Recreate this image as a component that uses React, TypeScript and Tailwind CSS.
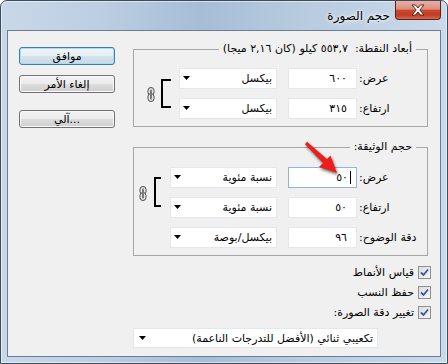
import React from "react";

const FONT = "font-['DejaVu_Sans',Tahoma,sans-serif]";

const DropArrow = () => (
  <svg width="7" height="4" viewBox="0 0 7 4" className="shrink-0">
    <path d="M0 0h7L3.5 4z" fill="#000" />
  </svg>
);

const Select = ({ value, width }: { value: string; width: string }) => (
  <div
    className={`${width} h-[21px] bg-white border border-[#e4e7eb] flex items-center justify-between pr-[4px] pl-[3px] mb-[1px]`}
  >
    <span className="leading-none">{value}</span>
    <DropArrow />
  </div>
);

const Field = ({ value, focused }: { value: string; focused?: boolean }) => (
  <div
    className={`w-[69px] h-[21px] ml-[9px] bg-white border flex items-center ${
      focused ? "border-[#8fb5de] pr-[5px] gap-[2px]" : "border-[#e4e7eb] pr-[9px]"
    }`}
  >
    {focused && <span className="w-px h-[13px] bg-black" />}
    <span className="leading-none">{value}</span>
  </div>
);

type RowProps = {
  label: string;
  value: string;
  unit: string;
  selWidth: string;
  focused?: boolean;
};

const Row = ({ label, value, unit, selWidth, focused }: RowProps) => (
  <div className="flex items-center h-[21px] gap-[2px]">
    <div className="w-[63px] text-left leading-none">{label}</div>
    <Field value={value} focused={focused} />
    <Select value={unit} width={selWidth} />
  </div>
);

const Chain = () => (
  <svg width="8" height="15" viewBox="0 0 8 15">
    <rect x="1" y="0.5" width="6" height="8" rx="3" fill="#e6e6e6" stroke="#4b4b4b" />
    <rect x="1" y="6.5" width="6" height="8" rx="3" fill="#e6e6e6" stroke="#4b4b4b" />
    <rect x="3" y="2.5" width="2" height="10" rx="1" fill="#7a7a7a" />
  </svg>
);

const Check = ({ label }: { label: string }) => (
  <div className="flex items-center h-[20px] gap-[4px]">
    <div className="w-[13px] h-[13px] border border-[#8e8f8f] bg-[linear-gradient(135deg,#d9dce0,#f7f7f7)] flex items-center justify-center">
      <svg width="9" height="9" viewBox="0 0 9 9">
        <path d="M1 4.5L3.5 7L8 1.5" fill="none" stroke="#3b5593" strokeWidth="1.8" />
      </svg>
    </div>
    <span className="leading-none">{label}</span>
  </div>
);

const Btn = ({ children, def }: { children: React.ReactNode; def?: boolean }) => (
  <div
    className={`h-[18px] w-[96px] rounded-[3px] border flex items-center justify-center leading-none ${
      def
        ? "border-[#3c7fb1] shadow-[inset_0_0_0_1px_#a8dcf8] bg-[linear-gradient(#f0f5f8_0%,#e6eef3_50%,#d7e3eb_50%,#c9d8e2_100%)]"
        : "border-[#707070] shadow-[inset_0_0_0_1px_#fbfbfb] bg-[linear-gradient(#f2f2f2_0%,#ebebeb_50%,#dddddd_50%,#cfcfcf_100%)]"
    }`}
  >
    {children}
  </div>
);

const RedArrow = () => (
  <svg
    width="50"
    height="50"
    viewBox="0 0 50 50"
    className="absolute left-[296px] top-[132px] drop-shadow-[1px_2px_1.5px_rgba(0,0,0,0.55)]"
  >
    <path d="M9 12.2L11 9.8L31.5 27.5L27.5 31.5Z" fill="#ee1c1c" />
    <path d="M41 41L23 35L34.5 23.5Z" fill="#ee1c1c" />
  </svg>
);

export default function App() {
  return (
    <div className={`relative w-[448px] h-[364px] ${FONT} text-[11px] text-black`}>
      <div className="w-full h-full flex flex-col rounded-t-[7px] border border-[#3a4c60] shadow-[inset_0_0_0_1px_rgba(255,255,255,0.55)] bg-[linear-gradient(90deg,#c9d8e8_0%,#bccee2_22%,#a6bdd6_45%,#b4c8dd_62%,#cbdaea_100%)] px-[6px] pb-[6px]">
        {/* title bar */}
        <div className="h-[29px] flex justify-end items-start">
          <div className="mt-[8px] mr-[5px] text-[12px] leading-[15px] [text-shadow:0_0_6px_#fff,0_0_3px_#fff]">
            حجم الصورة
          </div>
          <div className="w-[46px] h-[19px] rounded-b-[4px] border border-t-0 border-[#5b2119] bg-[linear-gradient(#eab0a4_0%,#dc8e7d_45%,#c9492f_52%,#c23d24_78%,#d7694f_100%)] flex items-center justify-center">
            <svg width="16" height="12" viewBox="0 0 16 12">
              <path
                d="M2 1h3.5L8 4l2.5-3H14l-4.2 5L14 11h-3.5L8 8l-2.5 3H2l4.2-5z"
                fill="#fff"
                stroke="#4a1a14"
                strokeWidth="0.9"
              />
            </svg>
          </div>
        </div>

        {/* client area */}
        <div dir="rtl" className="flex-1 border border-[#6b7d90] bg-[#f0f0f0] flex pr-[9px] pl-[11px]">
          <div className="w-[298px] flex flex-col pt-[11px]">
            <fieldset className="mr-[3px] border border-[#a7a7a7] pr-[5px] pt-[12px] pb-[7px]">
              <legend className="mr-[6px] px-[4px] leading-[14px]">
                أبعاد النقطة:&nbsp; ٥٥٣,٧ كيلو (كان ٢,١٦ ميجا)
              </legend>
              <div className="flex items-start">
                <div className="flex flex-col gap-[9px]">
                  <Row label="عرض:" value="٦٠٠" unit="بيكسل" selWidth="w-[98px]" />
                  <Row label="ارتفاع:" value="٣١٥" unit="بيكسل" selWidth="w-[98px]" />
                </div>
                <div className="mr-[8px] mt-[11px] w-[10px] h-[29px] border-l-2 border-y-2 border-black" />
                <div className="mr-[6px] mt-[19px]">
                  <Chain />
                </div>
              </div>
            </fieldset>

            <fieldset className="mr-[3px] mt-[13px] border border-[#a7a7a7] pr-[5px] pt-[13px] pb-[7px]">
              <legend className="mr-[6px] px-[4px] leading-[14px]">حجم الوثيقة:</legend>
              <div className="flex items-start">
                <div className="flex flex-col gap-[9px]">
                  <Row label="عرض:" value="٥٠" unit="نسبة مئوية" selWidth="w-[107px]" focused />
                  <Row label="ارتفاع:" value="٥٠" unit="نسبة مئوية" selWidth="w-[107px]" />
                  <Row label="دقة الوضوح:" value="٩٦" unit="بيكسل/بوصة" selWidth="w-[107px]" />
                </div>
                <div className="mr-[9px] mt-[10px] w-[7px] h-[30px] border-l-2 border-y-2 border-black" />
                <div className="mr-[7px] mt-[19px]">
                  <Chain />
                </div>
              </div>
            </fieldset>

            <div className="mt-[6px] flex flex-col">
              <Check label="قياس الأنماط" />
              <Check label="حفظ النسب" />
              <Check label="تغيير دقة الصورة:" />
            </div>

            <div className="mt-[6px] mr-[53px] w-[245px] h-[20px] bg-white border border-[#e4e7eb] flex items-center justify-between pr-[4px] pl-[5px]">
              <span className="leading-none">تكعيبي ثنائي (الأفضل للتدرجات الناعمة)</span>
              <DropArrow />
            </div>
          </div>

          <div className="w-[96px] mr-[18px] flex flex-col pt-[16px]">
            <Btn def>موافق</Btn>
            <div className="mt-[10px]">
              <Btn>إلغاء الأمر</Btn>
            </div>
            <div className="mt-[17px]">
              <Btn>...آلي</Btn>
            </div>
          </div>
        </div>
      </div>
      <RedArrow />
    </div>
  );
}
